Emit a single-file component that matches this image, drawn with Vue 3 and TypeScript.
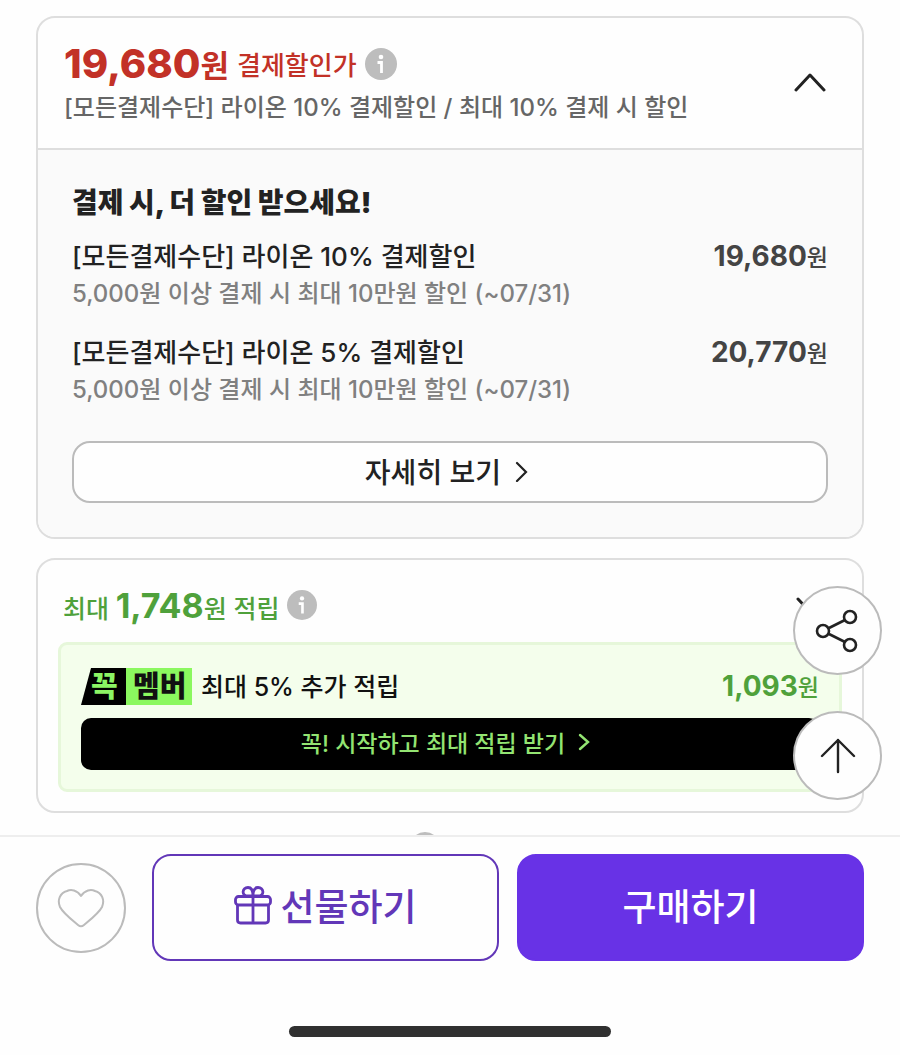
<script setup lang="ts">
interface Offer {
  title: string
  note: string
  price: string
}

const offers: Offer[] = [
  { title: '[모든결제수단] 라이온 10% 결제할인', note: '5,000원 이상 결제 시 최대 10만원 할인 (~07/31)', price: '19,680' },
  { title: '[모든결제수단] 라이온 5% 결제할인', note: '5,000원 이상 결제 시 최대 10만원 할인 (~07/31)', price: '20,770' },
]
</script>

<template>
  <div class="page">
    <main class="content">
      <section class="card discount">
        <header class="discount-head">
          <div class="discount-title">
            <div class="price-line">
              <strong class="price">19,680</strong><span class="won">원</span>
              <span class="label">결제할인가</span>
              <button class="info" type="button" aria-label="결제할인가 안내">
                <svg viewBox="0 0 32 32"><circle cx="16" cy="16" r="16" fill="#bdbdbd" /><circle cx="16" cy="9" r="2.3" fill="#fff" /><path d="M12.5 14.5h4V25" fill="none" stroke="#fff" stroke-width="2.8" /></svg>
              </button>
            </div>
            <p class="summary">[모든결제수단] 라이온 10% 결제할인 / 최대 10% 결제 시 할인</p>
          </div>
          <button class="toggle" type="button" aria-label="접기">
            <svg viewBox="0 0 32 20"><path d="M2 17 16 2 30 17" fill="none" stroke="#222" stroke-width="3" stroke-linecap="round" stroke-linejoin="round" /></svg>
          </button>
        </header>
        <div class="discount-body">
          <h2>결제 시, 더 할인 받으세요!</h2>
          <ul class="offers">
            <li v-for="offer in offers" :key="offer.price">
              <div>
                <p class="offer-title">{{ offer.title }}</p>
                <p class="offer-note">{{ offer.note }}</p>
              </div>
              <p class="amount"><strong>{{ offer.price }}</strong><span>원</span></p>
            </li>
          </ul>
          <button class="more" type="button">
            자세히 보기
            <svg viewBox="0 0 20 22"><path d="M2 3 11 12 2 21" fill="none" stroke="#222" stroke-width="2.2" stroke-linecap="round" /></svg>
          </button>
        </div>
      </section>

      <section class="card reward">
        <header class="reward-head">
          <p class="reward-title">최대 <strong>1,748</strong>원 적립</p>
          <button class="info small" type="button" aria-label="적립 안내">
            <svg viewBox="0 0 32 32"><circle cx="16" cy="16" r="16" fill="#bdbdbd" /><circle cx="16" cy="9" r="2.3" fill="#fff" /><path d="M12.5 14.5h4V25" fill="none" stroke="#fff" stroke-width="2.8" /></svg>
          </button>
          <button class="toggle" type="button" aria-label="펼치기">
            <svg viewBox="0 0 32 20"><path d="M2 4 16 19 30 4" fill="none" stroke="#222" stroke-width="3" stroke-linecap="round" stroke-linejoin="round" /></svg>
          </button>
        </header>
        <div class="member">
          <div class="member-row">
            <span class="badge"><b class="badge-dark">꼭</b><b class="badge-light">멤버</b></span>
            <span class="member-text">최대 5% 추가 적립</span>
            <p class="amount green"><strong>1,093</strong><span>원</span></p>
          </div>
          <button class="join" type="button">
            꼭! 시작하고 최대 적립 받기
            <svg viewBox="0 0 24 18"><path d="M5 2 13 9 5 16" fill="none" stroke="#93e472" stroke-width="2.4" stroke-linecap="round" /></svg>
          </button>
        </div>
      </section>

      <div class="next-row">
        <button class="info small" type="button" aria-label="안내">
          <svg viewBox="0 0 32 32"><circle cx="16" cy="16" r="16" fill="#bdbdbd" /></svg>
        </button>
      </div>

      <div class="floating">
        <button type="button" aria-label="공유">
          <svg viewBox="0 0 46 46" fill="none" stroke="#222" stroke-width="2.6"><path d="M14 20 30 12M14 26 30 34" /><circle cx="8" cy="23" r="6" /><circle cx="35" cy="9" r="6" /><circle cx="35" cy="37" r="6" /></svg>
        </button>
        <button type="button" aria-label="맨 위로">
          <svg viewBox="0 0 46 46" fill="none" stroke="#222" stroke-width="2.4" stroke-linecap="round" stroke-linejoin="round"><path d="M23 39V7M7 23 23 7 39 23" /></svg>
        </button>
      </div>
    </main>

    <footer class="bar">
      <div class="actions">
        <button class="like" type="button" aria-label="찜하기">
          <svg viewBox="0 0 48 42"><path d="M24 9C20 3 14 2 10 4 3 6 0 13 3 20 6 26 15 33 21 38Q24 40.5 27 38C33 33 42 26 45 20 48 13 45 6 38 4 34 2 28 3 24 9Z" fill="none" stroke="#bbb" stroke-width="2" stroke-linejoin="round" /></svg>
        </button>
        <button class="gift" type="button">
          <svg viewBox="0 0 38 40" fill="none" stroke="#6237b8" stroke-width="2.8" stroke-linejoin="round"><rect x="1.5" y="10.5" width="35" height="8.5" rx="3" /><path d="M3.5 19V34Q3.5 37 6.5 37H31.5Q34.5 37 34.5 34V19M19 10V37" /><path d="M19 10H14C7 10 8 1.5 14 1.5 18 1.5 19 5 19 10ZM19 10H24C31 10 30 1.5 24 1.5 20 1.5 19 5 19 10Z" /></svg>
          <span>선물하기</span>
        </button>
        <button class="buy" type="button"><span>구매하기</span></button>
      </div>
      <div class="home-indicator"></div>
    </footer>
  </div>
</template>

<style>
body {
  margin: 0;
  background: #fefefe;
}
</style>

<style scoped>
.page {
  height: 100vh;
  display: flex;
  flex-direction: column;
  background: #fefefe;
  color: #222;
  font-family: Inter, "Noto Sans CJK KR", sans-serif;
  font-weight: 500;
}

p,
h2,
ul {
  margin: 0;
  padding: 0;
}

button {
  padding: 0;
  border: 0;
  background: none;
  color: inherit;
  font: inherit;
  cursor: pointer;
}

svg {
  display: block;
}

.content {
  position: relative;
  flex: 1;
  min-height: 0;
  overflow: hidden;
  padding: 16px 36px 0;
}

.card {
  border: 2px solid #dedede;
  border-radius: 19px;
  overflow: hidden;
}

.discount-head {
  display: flex;
  align-items: center;
  justify-content: space-between;
  height: 132px;
  box-sizing: border-box;
  padding: 0 36px 0 26px;
  border-bottom: 2px solid #dedede;
}

.discount-title {
  padding-top: 2px;
}

.price-line {
  display: flex;
  align-items: center;
  height: 46px;
  color: #c23127;
}

.price {
  font-size: 40px;
  font-weight: 800;
}

.won {
  font-size: 31px;
  font-weight: 700;
}

.label {
  margin-left: 8px;
  font-size: 26px;
}

.info {
  width: 32px;
  height: 32px;
  margin-left: 8px;
}

.info.small {
  width: 30px;
  height: 30px;
}

.info svg {
  width: 100%;
  height: 100%;
}

.summary {
  color: #666;
  font-size: 24px;
  line-height: 41px;
}

.toggle {
  width: 32px;
  height: 20px;
}

.discount-body {
  padding: 37px 34px 34px;
  background: #fafafa;
}

h2 {
  font-size: 28px;
  font-weight: 900;
  line-height: 32px;
}

.offers {
  display: grid;
  gap: 22px;
  margin: 19px 0 33px;
  list-style: none;
}

.offers li {
  display: flex;
  justify-content: space-between;
}

.offer-title {
  font-size: 26px;
  line-height: 37px;
}

.offer-note {
  color: #808080;
  font-size: 24px;
  line-height: 37px;
}

.amount {
  display: flex;
  align-items: center;
  height: 35px;
  padding-bottom: 2px;
  color: #444;
  font-size: 23px;
}

.amount strong {
  font-size: 28px;
  font-weight: 700;
}

.more {
  display: flex;
  align-items: center;
  justify-content: center;
  gap: 14px;
  width: 100%;
  height: 62px;
  box-sizing: border-box;
  padding-bottom: 3px;
  border: 2px solid #bbb;
  border-radius: 18px;
  background: #fefefe;
  font-size: 28px;
}

.more svg {
  width: 20px;
  height: 22px;
}

.reward {
  margin-top: 19px;
  padding: 22px 20px 19px;
}

.reward-head {
  display: flex;
  align-items: center;
  height: 46px;
  padding: 0 14px 0 5px;
}

.reward-head .toggle {
  margin-left: auto;
}

.reward-title {
  color: #4fa13b;
  font-size: 25px;
}

.reward-title strong {
  font-size: 34px;
  font-weight: 700;
}

.member {
  margin-top: 14px;
  padding: 23px 20px 19px;
  border: 3px solid #e6f7da;
  border-radius: 9px;
  background: #f4feec;
}

.member-row {
  display: flex;
  align-items: center;
  height: 37px;
}

.badge {
  display: flex;
  height: 37px;
  font-size: 29px;
  line-height: 38px;
}

.badge b {
  font-weight: 900;
}

.badge-dark {
  width: 35px;
  padding-left: 10px;
  background: #000;
  color: #8bf564;
  clip-path: polygon(10px 0, 100% 0, 100% 100%, 0 100%);
}

.badge-light {
  width: 59px;
  padding-left: 7px;
  background: #8bf85f;
  color: #111;
}

.member-text {
  margin-left: 9px;
  padding-bottom: 4px;
  color: #111;
  font-size: 25px;
}

.member-row .amount {
  margin-left: auto;
}

.amount.green {
  color: #4fa13b;
}

.join {
  display: flex;
  align-items: center;
  justify-content: center;
  gap: 10px;
  width: 100%;
  height: 52px;
  box-sizing: border-box;
  margin-top: 13px;
  padding-bottom: 4px;
  border-radius: 10px;
  background: #000;
  color: #93e472;
  font-size: 23px;
}

.join svg {
  width: 24px;
  height: 18px;
}

.next-row {
  display: flex;
  justify-content: center;
  margin-top: 19px;
  padding-right: 58px;
}

.floating {
  position: absolute;
  right: 18px;
  bottom: 35px;
  display: grid;
  gap: 36px;
}

.floating button {
  display: grid;
  place-items: center;
  width: 89px;
  height: 89px;
  border: 2px solid #bbb;
  border-radius: 50%;
  background: #fefefe;
}

.floating svg {
  width: 46px;
  height: 46px;
}

.bar {
  padding: 17px 36px 18px;
  border-top: 2px solid #eee;
}

.actions {
  display: flex;
  align-items: center;
  gap: 18px;
}

.like {
  display: grid;
  place-items: center;
  flex: none;
  width: 90px;
  height: 90px;
  margin-right: 8px;
  border: 2px solid #bbb;
  border-radius: 50%;
}

.like svg {
  width: 48px;
  height: 42px;
}

.gift,
.buy {
  display: flex;
  align-items: center;
  justify-content: center;
  gap: 8px;
  flex: 1;
  height: 107px;
  box-sizing: border-box;
  border: 2px solid #6237b8;
  border-radius: 19px;
  font-size: 37px;
}

.gift span,
.buy span {
  padding-bottom: 5px;
}

.gift {
  color: #6237b8;
}

.gift svg {
  width: 38px;
  height: 40px;
  margin-bottom: 4px;
}

.buy {
  border-color: #6832e6;
  background: #6832e6;
  color: #fff;
}

.home-indicator {
  width: 39%;
  min-width: 120px;
  height: 11px;
  margin: 65px auto 0;
  border-radius: 6px;
  background: #303030;
}
</style>
